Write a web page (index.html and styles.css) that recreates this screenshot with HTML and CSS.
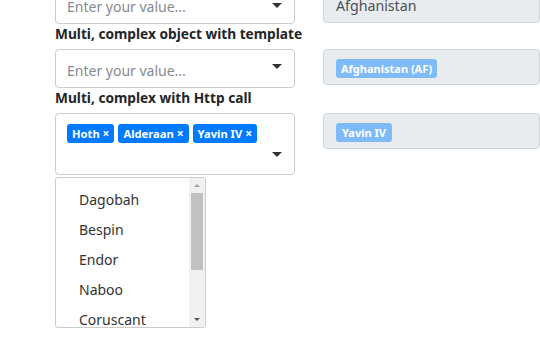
FILE: index.html
```html
<!DOCTYPE html>
<html>
<head>
<meta charset="utf-8">
<link rel="stylesheet" href="styles.css">
</head>
<body>
<div class="page">
  <div class="row first">
    <div class="select">
      <span class="placeholder">Enter your value...</span>
      <span class="caret"></span>
    </div>
    <div class="display"><span class="plain">Afghanistan</span></div>
  </div>
  <div class="label">Multi, complex object with template</div>
  <div class="row">
    <div class="select">
      <span class="placeholder">Enter your value...</span>
      <span class="caret"></span>
    </div>
    <div class="display"><span class="tag light">Afghanistan (AF)</span></div>
  </div>
  <div class="label">Multi, complex with Http call</div>
  <div class="row">
    <div class="col">
      <div class="select multi">
        <div class="tags">
          <span class="tag">Hoth <span class="x">×</span></span>
          <span class="tag">Alderaan <span class="x">×</span></span>
          <span class="tag">Yavin IV <span class="x">×</span></span>
        </div>
        <span class="caret"></span>
      </div>
      <div class="dropdown">
        <ul class="options">
          <li>Dagobah</li>
          <li>Bespin</li>
          <li>Endor</li>
          <li>Naboo</li>
          <li>Coruscant</li>
        </ul>
        <div class="scrollbar">
          <span class="arr up"></span>
          <span class="thumb"></span>
          <span class="arr down"></span>
        </div>
      </div>
    </div>
    <div class="display"><span class="tag light wide">Yavin IV</span></div>
  </div>
</div>
</body>
</html>
```
FILE: styles.css
```css
html, body {
  margin: 0;
  padding: 0;
  background: #fff;
  overflow: hidden;
}
body {
  font-family: "Noto Sans", "Open Sans", sans-serif;
  color: #212529;
  width: 540px;
  height: 345px;
}
.page {
  padding-left: 55px;
  margin-top: -15px;
}
.row {
  display: flex;
  align-items: flex-start;
  gap: 28px;
}
.col {
  display: flex;
  flex-direction: column;
  width: 240px;
}
.select {
  position: relative;
  box-sizing: border-box;
  width: 240px;
  height: 39px;
  border: 1px solid #ccc;
  border-radius: 4px;
  background: #fff;
  display: flex;
  align-items: center;
  padding-left: 11px;
  padding-top: 3px;
}
.placeholder {
  color: #858a8f;
  font-size: 14px;
}
.caret {
  position: absolute;
  right: 12px;
  top: 14px;
  width: 0;
  height: 0;
  border-left: 5px solid transparent;
  border-right: 5px solid transparent;
  border-top: 5px solid #333;
}
.first .select .caret { top: 17px; }
.display {
  box-sizing: border-box;
  flex: 1;
  height: 36px;
  background: #e9ecef;
  border: 1px solid #ced4da;
  border-radius: 4px;
  display: flex;
  align-items: flex-start;
  padding: 9px 0 0 12px;
}
.first .display {
  height: 35px;
  margin-top: 3px;
  align-items: center;
  padding-top: 0;
}
.plain {
  color: #495057;
  font-size: 14.2px;
}
.label {
  font-weight: bold;
  font-size: 13.7px;
  line-height: 20px;
  height: 25px;
  padding-top: 0;
  white-space: nowrap;
}
.tag {
  display: inline-block;
  background: #007bff;
  color: #fff;
  font-size: 11px;
  font-weight: bold;
  line-height: 19px;
  height: 19px;
  padding: 0 5px;
  border-radius: 3px;
}
.tag.wide { padding: 0 6px; }
.tags .tag {
  font-size: 11.2px;
  padding: 0 5px 0 5px;
}
.tag .x { font-size: 12px; }
.tag.light { background: #7fbbf8; }
.select.multi {
  height: 62px;
  align-items: flex-start;
  padding-top: 10px;
}
.tags {
  display: flex;
  gap: 4px;
}
.select.multi .caret { top: 38px; }
.dropdown {
  margin-top: 2px;
  box-sizing: border-box;
  width: 151px;
  height: 151px;
  border: 1px solid #ccc;
  border-radius: 3px;
  display: flex;
  overflow: hidden;
}
.options {
  list-style: none;
  margin: 0;
  padding: 7px 0 0 23px;
  flex: 1;
}
.options li {
  font-size: 14px;
  line-height: 30px;
  height: 30px;
  color: #333;
}
.scrollbar {
  width: 16px;
  background: #f1f1f1;
  display: flex;
  flex-direction: column;
  align-items: center;
}
.arr {
  width: 0;
  height: 0;
  border-left: 3px solid transparent;
  border-right: 3px solid transparent;
  margin: 6px 0;
}
.arr.up { border-bottom: 3px solid #a3a3a3; }
.arr.down { border-top: 3px solid #505050; margin-top: auto; }
.thumb {
  width: 12px;
  height: 77px;
  background: #c1c1c1;
  margin-top: 0;
}
```
